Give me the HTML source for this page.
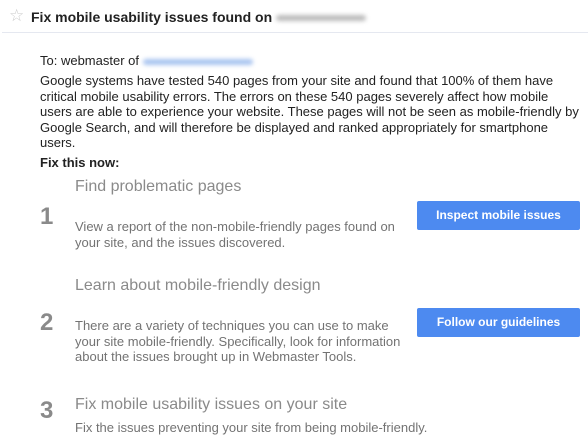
<!DOCTYPE html>
<html><head><style>
body{margin:0;width:588px;height:445px;background:#fff;font-family:"Liberation Sans",Arial,sans-serif;position:relative;overflow:hidden}
.a{position:absolute;white-space:nowrap}
.t{font-size:13px;color:#222;line-height:15.6px}
.g{color:#737373}
.h{font-size:16px;color:#8a8a8a}
.n{font-size:24px;font-weight:bold;color:#8a8a8a}
.b{position:absolute;left:417px;width:163px;height:29px;background:#4d8af0;border-radius:2px;color:#fff;font-size:12px;font-weight:bold;text-align:center;line-height:29px}
.blur{display:inline-block;height:6px;border-radius:3px;vertical-align:middle;filter:blur(2px)}
</style></head><body>
<div class="a" style="left:9px;top:6px;font-size:17px;color:#ccc">☆</div>
<div class="a" style="left:31px;top:9px;font-size:14px;font-weight:bold;color:#222">Fix mobile usability issues found on <span class="blur" style="width:90px;background:#bbb"></span></div>
<div class="a" style="left:2px;top:32px;width:586px;height:1px;background:#e5e8f0"></div>
<div class="a t" style="left:40px;top:53px">To: webmaster of <span class="blur" style="width:110px;background:#a8c4f0"></span></div>
<div class="a t" style="left:40px;top:73px;white-space:normal;width:542px">Google systems have tested 540 pages from your site and found that 100% of them have critical mobile usability errors. The errors on these 540 pages severely affect how mobile users are able to experience your website. These pages will not be seen as mobile-friendly by Google Search, and will therefore be displayed and ranked appropriately for smartphone users.</div>
<div class="a t" style="left:40px;top:155px;font-weight:bold">Fix this now:</div>
<div class="a h" style="left:75px;top:178px">Find problematic pages</div>
<div class="a n" style="left:40px;top:203px">1</div>
<div class="a t g" style="left:75px;top:219px">View a report of the non-mobile-friendly pages found on<br>your site, and the issues discovered.</div>
<div class="b" style="top:201px">Inspect mobile issues</div>
<div class="a h" style="left:75px;top:277px">Learn about mobile-friendly design</div>
<div class="a n" style="left:40px;top:309px">2</div>
<div class="a t g" style="left:75px;top:318px">There are a variety of techniques you can use to make<br>your site mobile-friendly. Specifically, look for information<br>about the issues brought up in Webmaster Tools.</div>
<div class="b" style="top:308px">Follow our guidelines</div>
<div class="a h" style="left:75px;top:396px">Fix mobile usability issues on your site</div>
<div class="a n" style="left:40px;top:397px">3</div>
<div class="a t g" style="left:75px;top:420px">Fix the issues preventing your site from being mobile-friendly.</div>
</body></html>
